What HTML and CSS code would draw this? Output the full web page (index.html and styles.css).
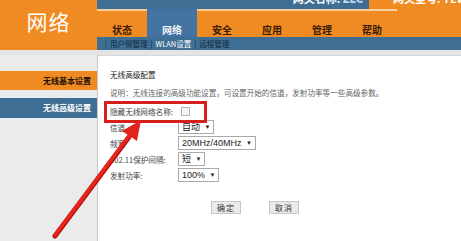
FILE: index.html
```html
<!DOCTYPE html>
<html lang="zh-CN">
<head>
    <meta charset="UTF-8">
    <title>网络 - WLAN设置</title>
    <link rel="stylesheet" href="styles.css">
</head>
<body>
    <div class="page">
        <header class="top">
            <div class="logo">网络</div>
            <div class="bar">
                <div class="strip">
                    <div class="strip-name"><span>网关名称: <b>ZLC</b></span></div>
                    <div class="strip-model"><span>网关型号: TEWA-600</span></div>
                </div>
                <nav class="tabs">
                    <a class="tab">状态</a>
                    <a class="tab active">网络</a>
                    <a class="tab">安全</a>
                    <a class="tab">应用</a>
                    <a class="tab">管理</a>
                    <a class="tab">帮助</a>
                    <span class="tab-rest"></span>
                </nav>
                <div class="subnav">
                    <span class="sep">|</span><a>用户侧管理</a>
                    <span class="sep">|</span><a class="current">WLAN设置</a>
                    <span class="sep">|</span><a>远程管理</a>
                </div>
            </div>
        </header>

        <div class="band"></div>

        <div class="main">
            <aside class="side">
                <a class="side-item basic">无线基本设置</a>
                <a class="side-item adv">无线高级设置</a>
            </aside>

            <section class="content">
                <h2 class="title">无线高级配置</h2>
                <p class="desc">说明：无线连接的高级功能设置，可设置开始的信道，发射功率等一些高级参数。</p>

                <div class="form">
                    <label>隐藏无线网络名称:</label>
                    <div><span class="check"></span></div>

                    <label>信道</label>
                    <div><span class="select">自动 <i>▼</i></span></div>

                    <label>频宽</label>
                    <div><span class="select">20MHz/40MHz <i>▼</i></span></div>

                    <label>802.11保护间隔:</label>
                    <div><span class="select">短 <i>▼</i></span></div>

                    <label>发射功率:</label>
                    <div><span class="select">100% <i>▼</i></span></div>
                </div>

                <div class="actions">
                    <button>确定</button>
                    <button>取消</button>
                </div>
            </section>
        </div>

        <!-- annotation drawn over the screenshot -->
        <div class="mark"></div>
        <svg class="arrow" width="461" height="241" viewBox="0 0 461 241">
            <line x1="55" y1="236" x2="129" y2="137" stroke="#b5120f" stroke-width="5" stroke-linecap="round"/>
            <line x1="55" y1="235" x2="129" y2="136" stroke="#e8261e" stroke-width="3.4" stroke-linecap="round"/>
            <polygon points="141,120 137,141 122,131" fill="#e3221b"/>
        </svg>
    </div>
</body>
</html>
```

FILE: styles.css
```css
body {
    margin: 0;
    font-family: "Liberation Sans", "Noto Sans CJK SC", sans-serif;
    color: #333;
}

.page {
    position: relative;
    width: 461px;
    height: 241px;
    overflow: hidden;
    background: #fff;
}

/* header */
.top {
    display: flex;
    height: 50px;
}

.logo {
    flex: none;
    width: 97px;
    background: #f08a22;
    color: #fff;
    font-family: "Noto Sans CJK SC", sans-serif;
    font-size: 21px;
    line-height: 42px;
    text-align: center;
    letter-spacing: 1px;
}

.bar {
    flex: 1;
    min-width: 0;
    display: flex;
    flex-direction: column;
}

.strip {
    display: flex;
    height: 9px;
    overflow: hidden;
    font-family: "Noto Sans CJK SC", sans-serif;
    font-size: 11px;
    color: #fff;
}

.strip > div {
    display: flex;
    align-items: flex-end;
    overflow: hidden;
}

.strip span {
    line-height: 12px;
    margin-bottom: 5px;
    font-weight: bold;
    white-space: nowrap;
}

.strip-name {
    flex: none;
    width: 272px;
    background: #3e6e93;
    justify-content: flex-end;
    padding-right: 6px;
    box-sizing: border-box;
}

.strip-name b {
    color: #bcd8f0;
}

.strip-model {
    flex: 1;
    min-width: 0;
    background: #f08a22;
    padding-left: 24px;
}

.tabs {
    display: flex;
    height: 28px;
    background: #f08a22;
}

.tab {
    flex: none;
    width: 50px;
    border-top: 2px solid #f7cf9f;
    box-sizing: border-box;
    text-align: center;
    padding-top: 13px;
    font-family: "Noto Sans CJK SC", sans-serif;
    font-size: 10px;
    line-height: 12px;
    font-weight: bold;
    color: #3b1d00;
}

.tab.active {
    background: #4373a0;
    border-top-color: #4373a0;
    color: #eef4fa;
}

.tab-rest {
    flex: 1;
}

.subnav {
    height: 13px;
    background: #3e6e93;
    padding-left: 7px;
    display: flex;
    align-items: center;
    gap: 2px;
    font-family: "Noto Sans CJK SC", sans-serif;
    font-size: 7.5px;
    color: #10263d;
}

.subnav .sep {
    color: #0e2235;
    margin: 0 1px;
}

.subnav .current {
    color: #fff;
}

.band {
    height: 5px;
    background: #e4e4e4;
}

/* body */
.main {
    display: flex;
    height: 186px;
}

.side {
    flex: none;
    width: 97px;
    background: #ebebeb;
    padding-top: 16px;
    box-sizing: border-box;
    display: flex;
    flex-direction: column;
    gap: 8px;
}

.side-item {
    height: 19px;
    line-height: 19px;
    text-align: right;
    padding-right: 6px;
    font-family: "Noto Sans CJK SC", sans-serif;
    font-size: 8px;
    font-weight: bold;
}

.side-item.basic {
    background: #f08a22;
    color: #1f1204;
}

.side-item.adv {
    height: 20px;
    line-height: 20px;
    background: #3e6e93;
    color: #fff;
}

.content {
    flex: 1;
    border-left: 1px solid #c9c9c9;
    border-top: 1px solid #d8d8d8;
    padding: 14px 0 0 12px;
    font-family: "Noto Sans CJK SC", sans-serif;
    font-size: 7.6px;
    color: #444;
}

.title {
    margin: 0;
    font-size: 7.6px;
    font-weight: normal;
    line-height: 10px;
    color: #222;
}

.desc {
    margin: 8px 0 0;
    line-height: 10px;
    color: #666;
}

.form {
    margin-top: 5px;
    display: grid;
    grid-template-columns: 68px auto;
    grid-auto-rows: 16px;
    align-items: center;
    width: 140px;
}

.form label {
    color: #444;
}

.check {
    display: block;
    width: 7px;
    height: 7px;
    margin-left: 3px;
    border: 1px solid #b5b5b5;
    background: #f4f4f4;
}

.select {
    display: inline-block;
    height: 12px;
    line-height: 12px;
    padding: 0 3px;
    border: 1px solid #a9a9a9;
    background: #fff;
    font-family: "Liberation Sans", "Noto Sans CJK SC", sans-serif;
    font-size: 9px;
    color: #222;
    white-space: nowrap;
}

.select i {
    font-style: normal;
    font-size: 6px;
    margin-left: 2px;
    vertical-align: 1px;
}

.actions {
    display: flex;
    gap: 28px;
    margin: 18px 0 0 101px;
}

.actions button {
    width: 30px;
    height: 13px;
    padding: 0;
    border: 1px solid #c8c8c8;
    background: #eaeaea;
    font-family: "Noto Sans CJK SC", sans-serif;
    font-size: 8px;
    color: #333;
    letter-spacing: 1px;
}

/* annotation overlay */
.mark {
    position: absolute;
    left: 104px;
    top: 101px;
    width: 97px;
    height: 16px;
    border: 3px solid #d61f1b;
}

.arrow {
    position: absolute;
    left: 0;
    top: 0;
}
```
